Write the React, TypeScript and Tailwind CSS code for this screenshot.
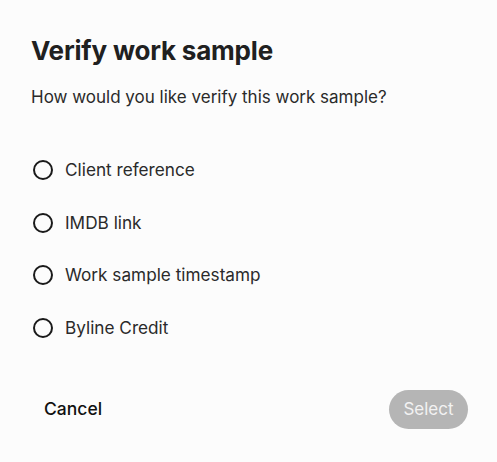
import React from "react";

const options = ["Client reference", "IMDB link", "Work sample timestamp", "Byline Credit"];

export default function App() {
  return (
    <div
      className="w-[497px] h-[462px] bg-[#fcfcfc] text-[#1f1f1f] flex flex-col pl-[31px] pr-[29px] pt-[35px]"
      style={{ fontFamily: "Inter, 'Noto Sans', sans-serif" }}
    >
      <h1 className="text-[26px] leading-[32px] font-bold tracking-[-0.2px] text-[#202020]">Verify work sample</h1>
      <p className="mt-[18px] text-[17px] leading-[24px] text-[#2a2a2a]">How would you like verify this work sample?</p>
      <div className="mt-[49px] flex flex-col gap-[28.7px]">
        {options.map((o) => (
          <label key={o} className="flex items-center gap-[12px] pl-[2px] h-[24px]">
            <span className="w-[20px] h-[20px] rounded-full border-2 border-[#1a1a1a]" />
            <span className="text-[17.2px] text-[#2a2a2a]">{o}</span>
          </label>
        ))}
      </div>
      <div className="mt-[50px] flex items-center justify-between">
        <button className="ml-[13px] text-[17.5px] font-medium text-[#111]">Cancel</button>
        <button className="w-[79px] h-[39px] rounded-full bg-[#b5b5b5] text-[#f2f2f2] text-[17px] font-normal">Select</button>
      </div>
    </div>
  );
}
